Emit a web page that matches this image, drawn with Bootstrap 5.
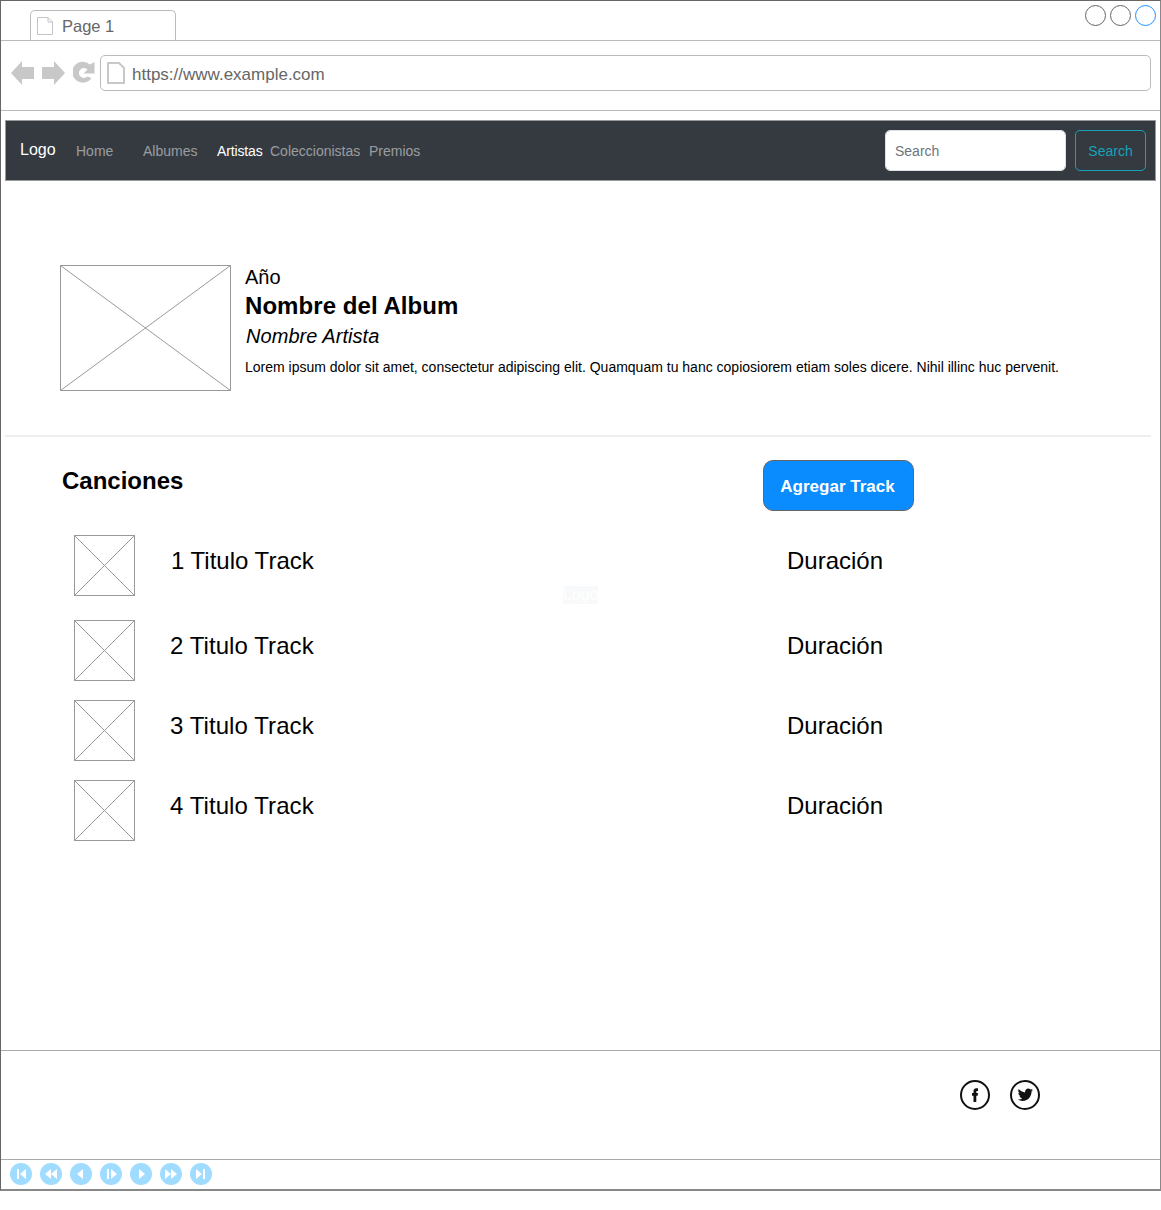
<!DOCTYPE html>
<html lang="es">
<head>
    <meta charset="UTF-8">
    <meta name="viewport" content="width=device-width, initial-scale=1.0">
    <title>Album</title>
    <link href="https://cdn.jsdelivr.net/npm/bootstrap@5.3.0/dist/css/bootstrap.min.css" rel="stylesheet">
    <style>
        body { font-family: "Liberation Sans", Arial, sans-serif; color: #000; background: #fff; }
        .frame { position: relative; width: 1161px; height: 1191px; border: 1px solid #666; border-bottom: 2px solid #888; border-right-color: #888; }
        .tabbar { height: 40px; border-bottom: 1px solid #bbb; padding-left: 29px; }
        .tabitem { width: 146px; height: 30px; margin-top: 9px; background: #fff; border: 1px solid #bbb; border-bottom: 0; border-radius: 5px 5px 0 0; padding: 0 0 0 6px; gap: 9px; font-size: 16.5px; color: #666; }
        .tabtext { padding-top: 2px; }
        .wincircles { gap: 4px; padding: 4px 4px 0 0; }
        .wincircle { width: 21px; height: 21px; border: 1px solid #666; border-radius: 50%; }
        .wincircle-blue { border-color: #1e90ff; }
        .addressbar { height: 70px; border-bottom: 1px solid #bbb; padding: 14px 9px 0 10px; }
        .urlbox { height: 36px; margin-left: 5px; border: 1px solid #bbb; border-radius: 5px; padding: 0 0 0 6px; gap: 7px; font-size: 17px; color: #666; }
        .urltext { padding-top: 4px; }
        .topnav { height: 61px; margin: 9px 4px 0 4px; background: #343a40; border: 1px solid #999; padding: 0 9px 0 14px; font-size: 14px; }
        .navlogo { color: #fff; font-size: 16px; width: 56px; margin-top: -2px; }
        .navlink { color: rgba(255, 255, 255, .5); text-decoration: none; padding-top: 1px; }
        .navlink-on { color: #fff; letter-spacing: -.15px; }
        .searchinput { width: 181px; height: 41px; font-size: 14px; padding-left: 9px; border-radius: 5px; margin-right: 9px; }
        .searchinput::placeholder { color: #6c757d; }
        .searchbtn { width: 71px; height: 41px; padding: 1px 0 0; font-size: 14px; color: #17a2b8; border: 1px solid #17a2b8; border-radius: 5px; }
        .albumhead { padding: 84px 0 0 59px; height: 254px; }
        .albumtext { margin-left: 14px; }
        .albumyear { font-size: 20px; line-height: 24px; }
        .albumname { font-size: 24px; line-height: 34px; font-weight: 700; margin: 0; letter-spacing: .06px; }
        .albumartist { font-size: 20px; line-height: 26px; font-style: italic; padding-left: 1px; letter-spacing: .05px; }
        .albumdesc { font-size: 14px; line-height: 20px; margin: 8px 0 0; }
        .divider { height: 2px; margin: 0 9px 0 4px; background: #eee; }
        .songshead { padding: 23px 0 0 61px; height: 98px; }
        .songstitle { font-size: 24px; font-weight: 700; width: 701px; margin: 0; padding-top: 7px; line-height: 28px; }
        .addbtn { width: 151px; height: 51px; padding: 2px 2px 0 0; font-size: 17px; font-weight: 700; color: #fff; background: #0a8cff; border: 1px solid #666; border-radius: 10px; }
        .trackrow { height: 80px; padding-left: 73px; font-size: 24px; }
        .trackrow-first { height: 85px; }
        .trackname { width: 617px; margin-left: 35px; padding-bottom: 28px; letter-spacing: .07px; }
        .tracktime { padding-bottom: 28px; }
        .trackrow-first .trackname { width: 616px; margin-left: 36px; letter-spacing: 0; }
        .trackrow-first .trackname, .trackrow-first .tracktime { padding-bottom: 34px; }
        .ghostlogo { position: absolute; left: 562px; top: 585px; width: 35px; height: 18px; background: #f8f9fa; color: #fff; font-size: 16px; line-height: 18px; overflow: hidden; }
        .sitefooter { position: absolute; left: 0; right: 0; top: 1049px; height: 110px; border-top: 1px solid #aaa; border-bottom: 1px solid #aaa; padding: 29px 0 0 959px; gap: 20px; }
        .playerbar { position: absolute; left: 9px; top: 1162px; gap: 8px; }
    </style>
</head>
<body>

<div class="frame">
    <div class="tabbar d-flex justify-content-between">
        <div class="tabitem d-flex align-items-center">
            <svg width="16" height="18" viewBox="0 0 16 18"><path d="M.5.5H11L15.500 5V17.500H.5Z M11 .5V5H15.500" fill="#fff" stroke="#c4c4c4"/></svg>
            <span class="tabtext">Page 1</span>
        </div>
        <div class="wincircles d-flex">
            <div class="wincircle"></div>
            <div class="wincircle"></div>
            <div class="wincircle wincircle-blue"></div>
        </div>
    </div>

    <div class="addressbar d-flex">
        <div class="d-flex align-items-center gap-2" style="height:36px">
            <svg width="23" height="24" viewBox="0 0 23 24"><path d="M0 12 11 0V6H23V18H11V24Z" fill="#c8c8c8"/></svg>
            <svg width="23" height="24" viewBox="0 0 23 24"><path d="M23 12 12 0V6H0V18H12V24Z" fill="#c8c8c8"/></svg>
            <svg width="22" height="24" viewBox="0 0 22 24"><path d="M18.500 17A10.500 10.500 0 1 1 17 3.500L21.500 1V12.500H10.500L14.500 8.500A5 5 0 1 0 14.500 15.500Z" fill="#c8c8c8"/></svg>
        </div>
        <div class="urlbox flex-grow-1 d-flex align-items-center">
            <svg width="18" height="22" viewBox="0 0 18 22"><path d="M1 1H12L17 6V21H1Z" fill="#fff" stroke="#c8c8c8" stroke-width="2"/></svg>
            <span class="urltext">https://www.example.com</span>
        </div>
    </div>

    <nav class="topnav d-flex align-items-center">
        <span class="navlogo">Logo</span>
        <a class="navlink" href="#" style="width:67px">Home</a>
        <a class="navlink" href="#" style="width:74px">Albumes</a>
        <a class="navlink navlink-on" href="#" style="width:53px">Artistas</a>
        <a class="navlink" href="#" style="width:99px">Coleccionistas</a>
        <a class="navlink" href="#">Premios</a>
        <form class="d-flex ms-auto">
            <input class="form-control searchinput" type="search" placeholder="Search">
            <button class="btn searchbtn" type="button">Search</button>
        </form>
    </nav>

    <section class="albumhead d-flex">
        <svg width="171" height="126" viewBox="0 0 171 126" class="flex-shrink-0"><rect x=".5" y=".5" width="170" height="125" fill="#fff" stroke="#999"/><path d="M.5.5 170.500 125.500M170.500.5 .5 125.500" stroke="#999"/></svg>
        <div class="albumtext">
            <div class="albumyear">Año</div>
            <h2 class="albumname">Nombre del Album</h2>
            <div class="albumartist">Nombre Artista</div>
            <p class="albumdesc">Lorem ipsum dolor sit amet, consectetur adipiscing elit. Quamquam tu hanc copiosiorem etiam soles dicere. Nihil illinc huc pervenit.</p>
        </div>
    </section>

    <div class="divider"></div>

    <div class="songshead d-flex align-items-start">
        <h3 class="songstitle">Canciones</h3>
        <button class="btn addbtn" type="button">Agregar Track</button>
    </div>

    <div class="trackrow trackrow-first d-flex">
        <svg width="61" height="61" viewBox="0 0 61 61" class="flex-shrink-0"><rect x=".5" y=".5" width="60" height="60" fill="#fff" stroke="#999"/><path d="M.5.5 60.500 60.500M60.500.5 .5 60.500" stroke="#999"/></svg>
        <div class="trackname d-flex align-items-center">1 Titulo Track</div>
        <div class="tracktime d-flex align-items-center">Duración</div>
    </div>
    <div class="trackrow d-flex">
        <svg width="61" height="61" viewBox="0 0 61 61" class="flex-shrink-0"><rect x=".5" y=".5" width="60" height="60" fill="#fff" stroke="#999"/><path d="M.5.5 60.500 60.500M60.500.5 .5 60.500" stroke="#999"/></svg>
        <div class="trackname d-flex align-items-center">2 Titulo Track</div>
        <div class="tracktime d-flex align-items-center">Duración</div>
    </div>
    <div class="trackrow d-flex">
        <svg width="61" height="61" viewBox="0 0 61 61" class="flex-shrink-0"><rect x=".5" y=".5" width="60" height="60" fill="#fff" stroke="#999"/><path d="M.5.5 60.500 60.500M60.500.5 .5 60.500" stroke="#999"/></svg>
        <div class="trackname d-flex align-items-center">3 Titulo Track</div>
        <div class="tracktime d-flex align-items-center">Duración</div>
    </div>
    <div class="trackrow d-flex">
        <svg width="61" height="61" viewBox="0 0 61 61" class="flex-shrink-0"><rect x=".5" y=".5" width="60" height="60" fill="#fff" stroke="#999"/><path d="M.5.5 60.500 60.500M60.500.5 .5 60.500" stroke="#999"/></svg>
        <div class="trackname d-flex align-items-center">4 Titulo Track</div>
        <div class="tracktime d-flex align-items-center">Duración</div>
    </div>

    <div class="ghostlogo">Logo</div>

    <footer class="sitefooter d-flex">
        <svg width="30" height="30" viewBox="0 0 30 30"><circle cx="15" cy="15" r="14" fill="#fff" stroke="#111" stroke-width="2"/><path d="M13.500 22V15.800H12V13H13.500V11.300C13.500 9.300 14.600 8.300 16.300 8.300H18V11H17C16.500 11 16.300 11.300 16.300 11.800V13H18L17.700 15.800H16.300V22Z" fill="#111"/></svg>
        <svg width="30" height="30" viewBox="0 0 30 30"><circle cx="15" cy="15" r="14" fill="#fff" stroke="#111" stroke-width="2"/><path d="M23 10C22.400 10.300 21.800 10.400 21.200 10.500 21.800 10.100 22.300 9.500 22.500 8.800 21.900 9.200 21.200 9.400 20.500 9.600 19.900 9 19.100 8.600 18.200 8.600 16.500 8.600 15.100 10 15.100 11.700 15.100 11.900 15.100 12.200 15.200 12.400 12.600 12.300 10.300 11 8.700 9.100 8.400 9.600 8.300 10.100 8.300 10.700 8.300 11.800 8.800 12.700 9.700 13.300 9.200 13.300 8.700 13.100 8.300 12.900 8.300 14.500 9.400 15.700 10.800 16 10.300 16.100 9.900 16.200 9.400 16.100 9.800 17.300 10.900 18.200 12.300 18.200 11.200 19 9.900 19.500 8.500 19.500L7.800 19.500C9.200 20.400 10.800 20.900 12.600 20.900 18.400 20.900 21.500 16.100 21.500 12L21.500 11.600C22.100 11.200 22.600 10.600 23 10Z" fill="#111"/></svg>
    </footer>

    <div class="playerbar d-flex">
        <svg width="22" height="22" viewBox="0 0 22 22"><circle cx="11" cy="11" r="11" fill="#a0dcff"/><path d="M7 6H9V16H7ZM16 6V16L10 11Z" fill="#fff"/></svg>
        <svg width="22" height="22" viewBox="0 0 22 22"><circle cx="11" cy="11" r="11" fill="#a0dcff"/><path d="M11 6V16L5 11ZM17 6V16L11 11Z" fill="#fff"/></svg>
        <svg width="22" height="22" viewBox="0 0 22 22"><circle cx="11" cy="11" r="11" fill="#a0dcff"/><path d="M13 6V16L7 11Z" fill="#fff"/></svg>
        <svg width="22" height="22" viewBox="0 0 22 22"><circle cx="11" cy="11" r="11" fill="#a0dcff"/><path d="M7 6H9V16H7ZM11 6V16L17 11Z" fill="#fff"/></svg>
        <svg width="22" height="22" viewBox="0 0 22 22"><circle cx="11" cy="11" r="11" fill="#a0dcff"/><path d="M9 6V16L15 11Z" fill="#fff"/></svg>
        <svg width="22" height="22" viewBox="0 0 22 22"><circle cx="11" cy="11" r="11" fill="#a0dcff"/><path d="M5 6V16L11 11ZM11 6V16L17 11Z" fill="#fff"/></svg>
        <svg width="22" height="22" viewBox="0 0 22 22"><circle cx="11" cy="11" r="11" fill="#a0dcff"/><path d="M6 6V16L12 11ZM13 6H15V16H13Z" fill="#fff"/></svg>
    </div>
</div>

<script src="https://cdn.jsdelivr.net/npm/bootstrap@5.3.0/dist/js/bootstrap.bundle.min.js"></script>
</body>
</html>
